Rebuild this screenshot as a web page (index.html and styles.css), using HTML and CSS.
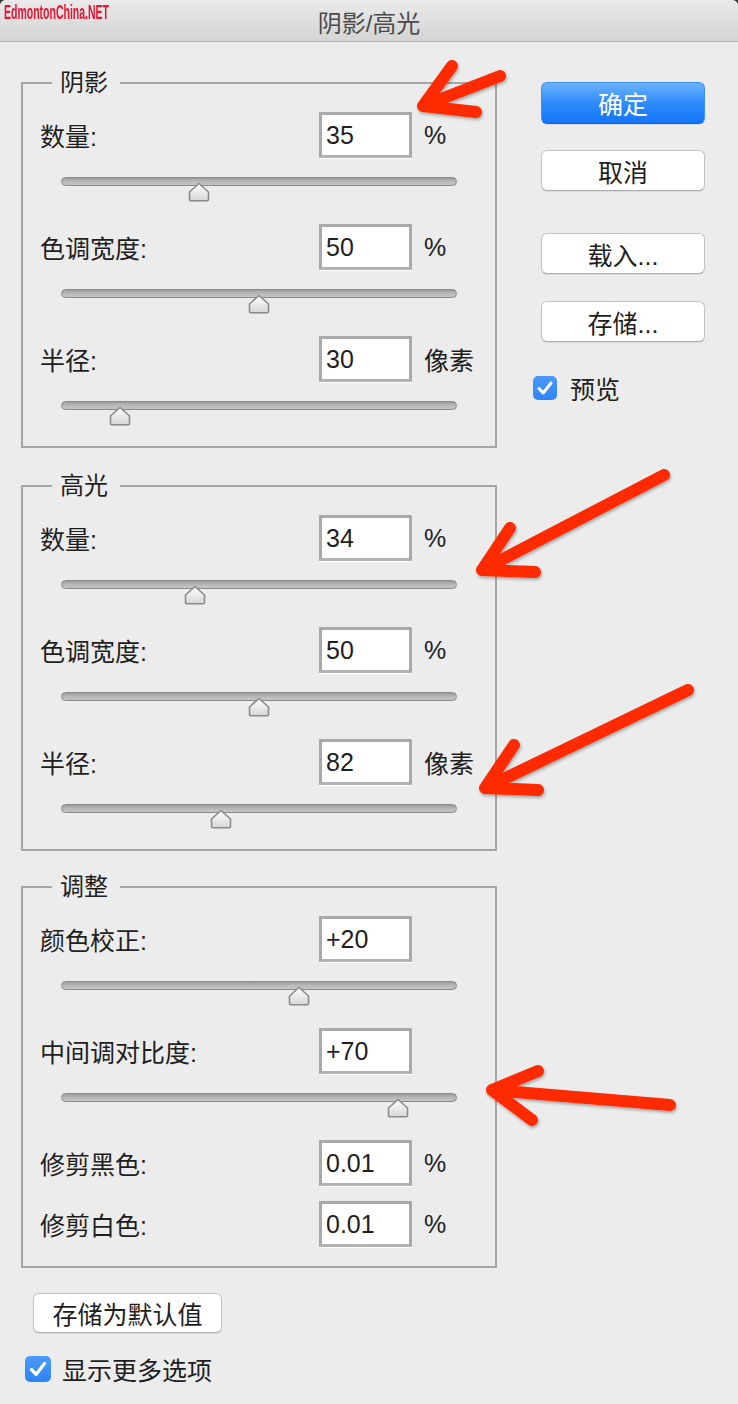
FILE: index.html
```html
<!DOCTYPE html>
<html lang="zh-CN">
<head>
    <meta charset="UTF-8">
    <meta name="viewport" content="width=device-width, initial-scale=1.0">
    <title>阴影/高光</title>
    <link rel="stylesheet" href="styles.css">
</head>
<body>
<svg class="defs" width="0" height="0">
    <defs>
        <linearGradient id="thumb-fill" x1="0" y1="0" x2="0" y2="1">
            <stop offset="0" stop-color="#ffffff"/>
            <stop offset="1" stop-color="#d6d6d6"/>
        </linearGradient>
        <symbol id="thumb" viewBox="0 0 22 20">
            <path d="M1.5 10 L11 1.5 L20.5 10 V17.5 Q20.5 18.8 19.2 18.8 H2.8 Q1.5 18.8 1.5 17.5 Z" fill="url(#thumb-fill)" stroke="#8a8a8a" stroke-width="1.6" stroke-linejoin="round"/>
        </symbol>
        <symbol id="tick" viewBox="0 0 24 24">
            <path d="M6 12.5 L10.2 17 L18 7" fill="none" stroke="#fff" stroke-width="3" stroke-linecap="round" stroke-linejoin="round"/>
        </symbol>
    </defs>
</svg>

<div class="window">
    <div class="titlebar">
        <span class="watermark">EdmontonChina.NET</span>
        <span class="title">阴影/高光</span>
    </div>

    <div class="content">
        <div class="groups">
            <fieldset class="group">
                <legend>阴影</legend>
                <div class="row"><span class="label">数量:</span><span class="field">35</span><span class="unit">%</span></div>
                <div class="slider"><div class="track"><svg class="thumb" style="left: 34.8%"><use href="#thumb"/></svg></div></div>
                <div class="row"><span class="label">色调宽度:</span><span class="field">50</span><span class="unit">%</span></div>
                <div class="slider"><div class="track"><svg class="thumb" style="left: 50%"><use href="#thumb"/></svg></div></div>
                <div class="row"><span class="label">半径:</span><span class="field">30</span><span class="unit">像素</span></div>
                <div class="slider"><div class="track"><svg class="thumb" style="left: 14.6%"><use href="#thumb"/></svg></div></div>
            </fieldset>

            <fieldset class="group">
                <legend>高光</legend>
                <div class="row"><span class="label">数量:</span><span class="field">34</span><span class="unit">%</span></div>
                <div class="slider"><div class="track"><svg class="thumb" style="left: 33.8%"><use href="#thumb"/></svg></div></div>
                <div class="row"><span class="label">色调宽度:</span><span class="field">50</span><span class="unit">%</span></div>
                <div class="slider"><div class="track"><svg class="thumb" style="left: 50%"><use href="#thumb"/></svg></div></div>
                <div class="row"><span class="label">半径:</span><span class="field">82</span><span class="unit">像素</span></div>
                <div class="slider"><div class="track"><svg class="thumb" style="left: 40.4%"><use href="#thumb"/></svg></div></div>
            </fieldset>

            <fieldset class="group group-adjust">
                <legend>调整</legend>
                <div class="row"><span class="label">颜色校正:</span><span class="field">+20</span><span class="unit"></span></div>
                <div class="slider"><div class="track"><svg class="thumb" style="left: 60.1%"><use href="#thumb"/></svg></div></div>
                <div class="row"><span class="label">中间调对比度:</span><span class="field">+70</span><span class="unit"></span></div>
                <div class="slider"><div class="track"><svg class="thumb" style="left: 85.4%"><use href="#thumb"/></svg></div></div>
                <div class="row"><span class="label">修剪黑色:</span><span class="field">0.01</span><span class="unit">%</span></div>
                <div class="row"><span class="label">修剪白色:</span><span class="field">0.01</span><span class="unit">%</span></div>
            </fieldset>

            <div class="footer">
                <button class="btn btn-default">存储为默认值</button>
                <label class="check check-more"><svg class="box"><use href="#tick"/></svg>显示更多选项</label>
            </div>
        </div>

        <div class="actions">
            <button class="btn btn-primary">确定</button>
            <button class="btn btn-cancel">取消</button>
            <button class="btn btn-load">载入...</button>
            <button class="btn btn-save">存储...</button>
            <label class="check check-preview"><svg class="box"><use href="#tick"/></svg>预览</label>
        </div>
    </div>

    <!-- red annotation arrows drawn over the dialog -->
    <svg class="arrows" width="738" height="1404" viewBox="0 0 738 1404">
        <defs>
            <filter id="arrow-shadow" x="-10%" y="-10%" width="120%" height="120%">
                <feDropShadow dx="1" dy="2" stdDeviation="1.5" flood-color="#000" flood-opacity="0.3"/>
            </filter>
        </defs>
        <g fill="none" stroke="#ff2a00" stroke-width="12" stroke-linecap="round" stroke-linejoin="round" filter="url(#arrow-shadow)">
            <path d="M500 76 L423 106 M452 66 L423 106 L476 112"/>
            <path d="M664 475 L482 570 M510 528 L482 570 L535 572"/>
            <path d="M688 690 L485 788 M514 745 L485 788 L538 790"/>
            <path d="M670 1105 L492 1090 M538 1071 L492 1090 L532 1120"/>
        </g>
    </svg>
</div>
</body>
</html>
```

FILE: styles.css
```css
:root {
    --bg: #ececec;
    --frame: #a6a6a6;
    --text: #1e1e1e;
    --blue: #2a87fa;
}

html, body {
    margin: 0;
    background: #3a3a3a;
}

body {
    font-family: 'Liberation Sans', 'Noto Sans CJK SC', sans-serif;
    font-size: 25px;
    color: var(--text);
}

.defs {
    position: absolute;
}

.window {
    position: relative;
    width: 738px;
    height: 1404px;
    background: var(--bg);
    border-radius: 6px 6px 0 0;
    overflow: hidden;
}

.titlebar {
    position: relative;
    height: 42px;
    box-sizing: border-box;
    border-bottom: 1px solid #b1b1b1;
    background: linear-gradient(#eaeaea, #d4d4d4);
    display: flex;
    align-items: center;
    justify-content: center;
}

.title {
    font-size: 24px;
    color: #4b4b4b;
    padding-top: 2px;
}

.watermark {
    position: absolute;
    left: 4px;
    top: 0;
    font-size: 21px;
    font-weight: bold;
    color: #e41432;
    transform: scaleX(0.5);
    transform-origin: left center;
    white-space: nowrap;
}

.content {
    display: flex;
    align-items: flex-start;
    padding: 29px 0 0 21px;
}

.groups {
    width: 476px;
}

/* group boxes */
.group {
    margin: 0;
    padding: 17px 17px 0;
    border: 2px solid var(--frame);
}

.group + .group {
    margin-top: 26px;
}

.group-adjust {
    padding-bottom: 19px;
}

.group + .group-adjust {
    margin-top: 24px;
}

.group legend {
    font-size: 24px;
    line-height: 24px;
    margin-left: 12px;
    padding: 0 12px 0 8px;
}

.row {
    display: flex;
    align-items: center;
    height: 46px;
}

.row + .row {
    margin-top: 15px;
}

.label {
    width: 279px;
    flex: none;
}

.field {
    flex: none;
    width: 93px;
    height: 46px;
    box-sizing: border-box;
    border: 3px solid #a9a9a9;
    border-bottom-color: #b3b3b3;
    background: #fff;
    padding-left: 4px;
    display: flex;
    align-items: center;
    box-shadow: 0 1px 0 #fff;
}

.unit {
    margin-left: 12px;
}

/* sliders */
.slider {
    height: 66px;
    padding-top: 19px;
    box-sizing: border-box;
}

.slider:last-child {
    height: 64px;
}

.track {
    position: relative;
    margin-left: 21px;
    width: 396px;
    height: 9px;
    box-sizing: border-box;
    border-radius: 5px;
    border: 1px solid #8a8a8a;
    background: linear-gradient(#9d9d9d, #b8b8b8 50%, #c6c6c6);
}

.thumb {
    position: absolute;
    top: 4px;
    width: 22px;
    height: 20px;
    margin-left: -11px;
}

/* right column */
.actions {
    margin-left: 44px;
    width: 164px;
    display: flex;
    flex-direction: column;
}

.btn {
    font: inherit;
    color: var(--text);
    background: #fff;
    border: 1px solid #c3c3c3;
    border-bottom-color: #adadad;
    border-radius: 6px;
    height: 41px;
    padding: 0;
    display: flex;
    align-items: center;
    justify-content: center;
    box-shadow: 0 1px 1px rgba(0, 0, 0, 0.08);
}

.btn-primary {
    margin-top: 11px;
    height: 42px;
    color: #fff;
    border-color: #3d92f8;
    border-bottom-color: #0d63de;
    background: linear-gradient(#6db3fb, #2f8bfb 50%, #1274f8);
}

.btn-cancel {
    margin-top: 26px;
}

.btn-load {
    margin-top: 42px;
}

.btn-save {
    margin-top: 27px;
}

.check {
    display: flex;
    align-items: center;
}

.check .box {
    flex: none;
    width: 24px;
    height: 24px;
    border-radius: 5px;
    background: linear-gradient(#4a9bf7, #2f84f2);
}

.check-preview {
    margin: 28px 0 0 -8px;
}

.check-preview .box {
    margin-right: 13px;
}

/* footer */
.footer {
    padding-top: 25px;
}

.btn-default {
    margin-left: 12px;
    width: 189px;
    height: 40px;
}

.check-more {
    margin: 18px 0 0 4px;
}

.check-more .box {
    width: 26px;
    height: 26px;
    margin-right: 11px;
}

.arrows {
    position: absolute;
    left: 0;
    top: 0;
    pointer-events: none;
}
```
